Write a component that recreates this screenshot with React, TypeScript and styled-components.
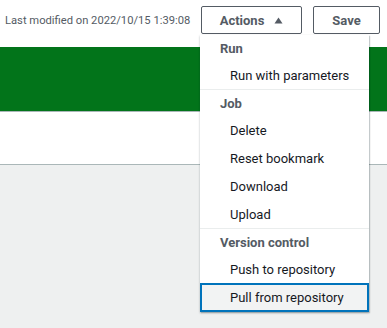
import styled, { createGlobalStyle } from 'styled-components'

const COLORS = {
  text: '#16191f',
  muted: '#545b64',
  green: '#02741a',
  page: '#eef0f0',
  line: '#aab7b8',
  divider: '#eaeded',
  focus: '#0073bb',
  hover: '#f2f3f3',
}

const GlobalStyle = createGlobalStyle`
  html, body {
    margin: 0;
    padding: 0;
    background: ${COLORS.page};
    font-family: Roboto, "Liberation Sans", Arial, sans-serif;
    color: ${COLORS.text};
  }
`

const Page = styled.div`
  width: 387px;
  height: 328px;
  position: relative;
  overflow: hidden;
`

const TopBar = styled.header`
  display: flex;
  align-items: center;
  height: 47px;
  padding: 0 7px 0 5px;
  box-sizing: border-box;
  background: #fff;
`

const Status = styled.span`
  flex: 1;
  font-size: 11.2px;
  color: ${COLORS.muted};
  margin-top: -7px;
`

const Actions = styled.div`
  position: relative;
  display: flex;
  gap: 11px;
  margin-top: -7px;
`

const Button = styled.button<{ $width: number }>`
  display: flex;
  align-items: center;
  justify-content: center;
  gap: 10px;
  width: ${p => p.$width}px;
  height: 28px;
  padding: 0;
  border: 1px solid ${COLORS.muted};
  border-radius: 2px;
  background: #fff;
  color: ${COLORS.muted};
  font-family: inherit;
  font-weight: 700;
  font-size: 13px;
`

const Banner = styled.div`
  height: 64px;
  background: ${COLORS.green};
  border-bottom: 1px solid ${COLORS.line};
`

const Panel = styled.div`
  height: 52px;
  background: #fff;
  border-bottom: 1px solid ${COLORS.line};
`

const Menu = styled.ul`
  position: absolute;
  top: 29px;
  left: -1px;
  width: 169px;
  margin: 0;
  padding: 0;
  list-style: none;
  background: #fff;
  box-shadow: 0 1px 2px rgba(0, 28, 36, 0.3), 1px 1px 1px rgba(0, 28, 36, 0.15);
`

const Group = styled.li`
  & + & {
    border-top: 1px solid ${COLORS.divider};
  }
`

const GroupTitle = styled.div`
  height: 26px;
  line-height: 27px;
  padding-left: 20px;
  font-size: 13px;
  font-weight: 700;
  color: ${COLORS.muted};
`

const Item = styled.div<{ $active?: boolean }>`
  height: 28px;
  line-height: 29px;
  padding-left: 30px;
  font-size: 13px;
  color: ${COLORS.text};
  box-sizing: border-box;
  ${p =>
    p.$active &&
    `
    background: ${COLORS.hover};
    border: 2px solid ${COLORS.focus};
    line-height: 25px;
    padding-left: 28px;
    height: 29px;
  `}
`

const Caret = () => (
  <svg width="9" height="7" viewBox="0 0 9 7">
    <path d="M4.5 0.5 L8.5 6.5 L0.5 6.5 Z" fill={COLORS.muted} />
  </svg>
)

const groups = [
  { title: 'Run', items: ['Run with parameters'] },
  { title: 'Job', items: ['Delete', 'Reset bookmark', 'Download', 'Upload'] },
  { title: 'Version control', items: ['Push to repository', 'Pull from repository'] },
]

export default function App() {
  return (
    <Page>
      <GlobalStyle />
      <TopBar>
        <Status>Last modified on 2022/10/15 1:39:08</Status>
        <Actions>
          <Button $width={101}>
            Actions <Caret />
          </Button>
          <Button $width={67}>Save</Button>
          <Menu>
            {groups.map(g => (
              <Group key={g.title}>
                <GroupTitle>{g.title}</GroupTitle>
                {g.items.map(i => (
                  <Item key={i} $active={i === 'Pull from repository'}>
                    {i}
                  </Item>
                ))}
              </Group>
            ))}
          </Menu>
        </Actions>
      </TopBar>
      <Banner />
      <Panel />
    </Page>
  )
}
